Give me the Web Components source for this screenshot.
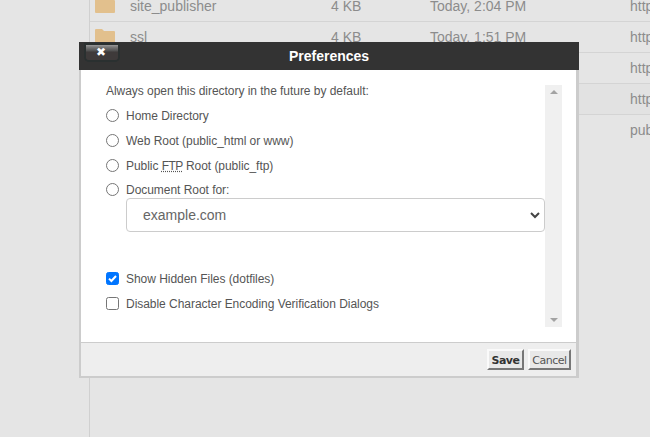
<!DOCTYPE html>
<html><head><meta charset="utf-8">
<style>
html,body{margin:0;padding:0;height:100%;overflow:hidden;background:#e5e5e5;font-family:"Liberation Sans",Arial,sans-serif}
abbr{letter-spacing:-.6px}
</style></head><body>
<template id="t-row">
<style>
:host{display:grid;grid-template-columns:35px 201px 99px 200px 1fr;height:30px;border-bottom:1px solid #d4d4d4;align-items:center;font-size:14px;color:#8c8c8c;padding-left:5px;white-space:nowrap;overflow:hidden}
:host([last]){border-bottom-color:transparent}
:host([shade]){background:#e2e2e2}
svg{display:block}
.i{visibility:var(--v,visible)}
</style>
<svg class="i" width="20" height="16" viewBox="0 0 20 16"><path d="M1 0h6l2 2h10a1 1 0 0 1 1 1v11a1 1 0 0 1-1 1H1a1 1 0 0 1-1-1V1a1 1 0 0 1 1-1z" fill="#e2c08d"/></svg>
<span><slot name="n"></slot></span><span><slot name="s"></slot></span><span><slot name="d"></slot></span><span><slot name="u"></slot></span>
</template>
<template id="t-back">
<style>
:host{display:flex;flex-direction:column;width:100%;height:100%;padding-left:89px;box-sizing:border-box;overflow:hidden}
.c{border-left:1px solid #d0d0d0;flex:1;margin-top:-9px}
</style><div class="c"><slot></slot></div>
</template>
<template id="t-dialog">
<style>
:host{display:flex;flex-direction:column;position:absolute;left:79px;top:42px;width:500px;height:336px;box-sizing:border-box;border:2px solid #ccc;border-top:0;border-right-width:3px;border-left-width:2px;background:#fff;color:#555;font-size:12px}
header{height:28px;background:#333;margin:0 -3px 0 -2px;display:grid;grid-template-columns:1fr;place-items:center;color:#fff;font-weight:bold;font-size:14px;position:relative}
main{flex:1;display:flex;min-height:0;padding:15px 14px 15px 25px}
.txt{flex:1;min-width:0}
footer{height:34px;box-sizing:border-box;background:#eee;border-top:1px solid #ccc;display:flex;justify-content:flex-end;align-items:flex-start;gap:4px;padding:6px 5px 0 0}
</style>
<header><slot name="close"></slot><slot name="title"></slot></header>
<main><div class="txt"><slot></slot></div><slot name="scroll"></slot></main>
<footer><slot name="actions"></slot></footer>
</template>
<template id="t-close">
<style>
:host{position:absolute;left:7px;top:3px;width:32px;height:15px;box-sizing:border-box;padding-right:2px;border-radius:0 0 3px 3px;background:linear-gradient(#9a9a9a 0,#7a7a7a 2px,#4f4f4f 6px,#3e3a3a 7px,#3e3a3a 100%);box-shadow:0 0 0 2px #2a3030;color:#fff;font:bold 12px/15px "DejaVu Sans",sans-serif;text-align:center}
</style>✖
</template>
<template id="t-opt">
<style>
:host{display:flex;align-items:center;height:25px;gap:7px;font-size:12px;color:#555;letter-spacing:-.04px}
.r{width:13px;height:13px;box-sizing:border-box;border:1px solid #767676;border-radius:50%;background:#fff;flex:none}
:host([type=check]) .r{border-radius:2.5px}
:host([checked]) .r{background:#0075ff;border-color:#0075ff;display:grid;place-items:center}
svg{display:none}
:host([checked]) svg{display:block}
</style><span class="r"><svg width="11" height="11" viewBox="0 0 11 11"><path d="M2 5.6 4.4 8 9 3" fill="none" stroke="#fff" stroke-width="2"/></svg></span><span><slot></slot></span>
</template>
<template id="t-select">
<style>
:host{display:flex;align-items:center;justify-content:space-between;height:34px;box-sizing:border-box;margin-left:20px;border:1px solid #ccc;border-radius:4px;background:#fff;padding:0 4px 0 16px;font-size:14px;color:#666}
svg{display:block}
</style><span><slot></slot></span><svg width="10" height="7" viewBox="0 0 10 7"><path d="M1 1 5 5 9 1" fill="none" stroke="#444" stroke-width="2"/></svg>
</template>
<template id="t-scroll">
<style>
:host{display:flex;flex:none;flex-direction:column;justify-content:space-between;align-items:center;width:17px;background:#f0f0f0;height:242px;box-sizing:border-box;padding:5px 0}
i{display:block;width:0;height:0;border:4px solid transparent;border-top:0;border-bottom:4px solid #a3a3a3}
i+i{border-bottom:0;border-top:4px solid #a3a3a3}
</style><i></i><i></i>
</template>
<template id="t-btn">
<style>
:host{display:block;box-sizing:border-box;height:21px;border:2px solid;border-color:#fafafa #777 #777 #fafafa;background:#e8e8e8;font:11px/19px "DejaVu Sans",Verdana,sans-serif;color:#555;text-align:center;width:43px;letter-spacing:-.5px;overflow:hidden}
:host([primary]){font-weight:bold;color:#333;width:37px;letter-spacing:-.5px}
</style><slot></slot>
</template>

<back-drop>
<file-row><span slot="n">site_publisher</span><span slot="s">4 KB</span><span slot="d">Today, 2:04 PM</span><span slot="u">https://example.com</span></file-row>
<file-row><span slot="n">ssl</span><span slot="s">4 KB</span><span slot="d">Today, 1:51 PM</span><span slot="u">https://example.com</span></file-row>
<file-row style="--v:hidden"><span slot="u">https://example.com</span></file-row>
<file-row shade style="--v:hidden"><span slot="u">https://example.com</span></file-row>
<file-row last style="--v:hidden"><span slot="u">public</span></file-row>
</back-drop>

<pref-dialog>
<close-btn slot="close"></close-btn>
<span slot="title">Preferences</span>
<div style="height:12px;line-height:12px;margin-bottom:6px;color:#555;letter-spacing:-.04px">Always open this directory in the future by default:</div>
<pref-opt>Home Directory</pref-opt>
<pref-opt>Web Root (public_html or www)</pref-opt>
<pref-opt>Public <abbr title="File Transfer Protocol">FTP</abbr> Root (public_ftp)</pref-opt>
<pref-opt style="height:23px;margin-bottom:-3px">Document Root for:</pref-opt>
<pref-select>example.com</pref-select>
<div style="height:34px"></div>
<pref-opt type="check" checked>Show Hidden Files (dotfiles)</pref-opt>
<pref-opt type="check">Disable Character Encoding Verification Dialogs</pref-opt>
<scroll-bar slot="scroll"></scroll-bar>
<pref-btn slot="actions" primary>Save</pref-btn>
<pref-btn slot="actions">Cancel</pref-btn>
</pref-dialog>

<script>
const reg=(n,id)=>customElements.define(n,class extends HTMLElement{constructor(){super();this.attachShadow({mode:'open'}).appendChild(document.getElementById(id).content.cloneNode(true))}});
reg('file-row','t-row');reg('back-drop','t-back');reg('pref-dialog','t-dialog');reg('close-btn','t-close');reg('pref-opt','t-opt');reg('pref-select','t-select');reg('scroll-bar','t-scroll');reg('pref-btn','t-btn');
</script>
</body></html>
